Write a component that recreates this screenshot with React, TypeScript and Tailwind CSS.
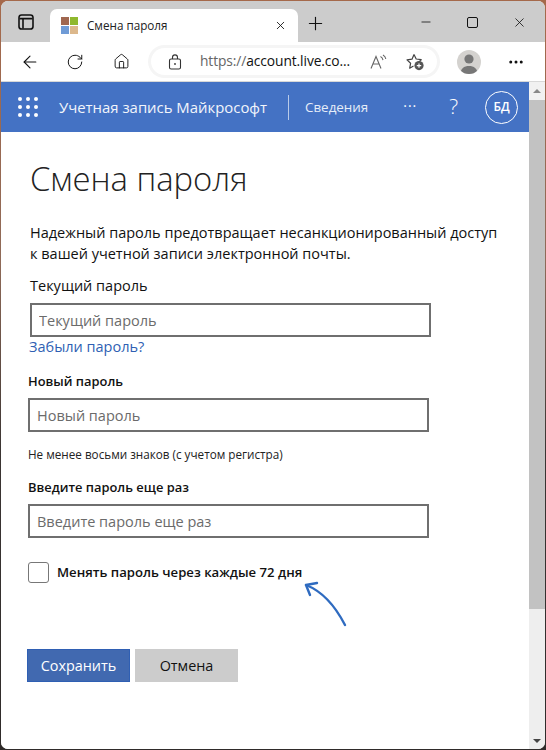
import { ArrowLeft, RotateCw, Home, Plus, X, Minus, MoreHorizontal } from "lucide-react";

const font = "font-['Open_Sans','Noto_Sans',sans-serif]";

function Field({ placeholder, width, className = "" }: { placeholder: string; width: string; className?: string }) {
  return (
    <input
      readOnly
      placeholder={placeholder}
      className={`h-[34px] ${width} border-2 border-[#6f6f6f] bg-white px-[7px] text-[14.5px] text-[#333] outline-none placeholder:text-[#6b6b6b] ${className}`}
    />
  );
}

export default function App() {
  return (
    <div className={`h-[750px] w-[546px] overflow-hidden bg-[linear-gradient(180deg,#a5694b_0%,#8f6a58_35%,#3b3533_60%,#2f2b2a_100%)] pb-px pl-px pr-px pt-px ${font}`}>
      <div className="flex h-[748px] w-[544px] flex-col overflow-hidden rounded-t-[7px] rounded-b-[7px] bg-white">
        {/* tab strip */}
        <div className="flex h-[41px] shrink-0 items-end bg-[#cccccc]">
          <div className="flex h-[33px] w-[49px] items-center justify-center pb-[8px]">
            <svg width="16" height="16" viewBox="0 0 16 16" fill="none" stroke="#111" strokeWidth="1.6">
              <rect x="1" y="1" width="14" height="14" rx="2.6" />
              <path d="M1.5 4.6h13M5 4.6V14.5" />
            </svg>
          </div>
          <div className="flex h-[33px] w-[248px] items-center rounded-t-[7px] bg-white pl-[11px] pr-[11px]">
            <div className="grid h-[17px] w-[17px] shrink-0 grid-cols-2 gap-px">
              <span className="bg-[#a0674f]" />
              <span className="bg-[#8fb82e]" />
              <span className="bg-[#6f9bd6]" />
              <span className="bg-[#dcb88c]" />
            </div>
            <span className="ml-[9px] flex-1 text-[11.7px] text-[#222]">Смена пароля</span>
            <X size={13} strokeWidth={1.6} color="#111" />
          </div>
          <div className="flex h-[33px] w-[35px] items-center justify-center pb-[5px]">
            <Plus size={21} strokeWidth={1.3} color="#111" />
          </div>
          <div className="flex h-[33px] flex-1 items-start justify-end pr-[3px] pt-[3px]">
            <div className="flex h-[20px] w-[46px] items-center justify-center"><Minus size={14} strokeWidth={1.4} color="#111" /></div>
            <div className="flex h-[20px] w-[47px] items-center justify-center"><span className="h-[11px] w-[11px] rounded-[2px] border-[1.5px] border-[#111]" /></div>
            <div className="flex h-[20px] w-[46px] items-center justify-center"><X size={15} strokeWidth={1.3} color="#111" /></div>
          </div>
        </div>
        {/* toolbar */}
        <div className="flex h-[40px] shrink-0 items-center border-b border-[#d8d8d8] bg-white">
          <div className="ml-[19px] flex w-[20px] justify-center"><ArrowLeft size={20} strokeWidth={1.3} color="#111" /></div>
          <div className="ml-[25px] flex w-[20px] justify-center"><RotateCw size={18} strokeWidth={1.3} color="#111" /></div>
          <div className="ml-[26px] flex w-[20px] justify-center"><Home size={17} strokeWidth={1.3} color="#111" /></div>
          <div className="ml-[17px] flex h-[33px] w-[292px] shrink-0 items-center rounded-full bg-[#f5f5f5] p-[3px]">
            <div className="flex h-full w-full items-center rounded-full bg-white pl-[17px]">
              <svg width="14" height="16" viewBox="0 0 14 16" fill="none" stroke="#333" strokeWidth="1.1">
                <rect x="1.5" y="5" width="11" height="10" rx="1.6" />
                <path d="M4.5 5V3.4a2.5 2.5 0 0 1 5 0V5" />
                <circle cx="7" cy="10" r="0.9" fill="#333" stroke="none" />
              </svg>
              <span className="ml-[18px] w-[158px] shrink-0 overflow-hidden whitespace-nowrap text-[13.8px] tracking-[-0.1px] text-[#111]"><span className="text-[#666]">https://</span>account.live.co...</span>
              <svg className="ml-[12px] shrink-0" width="17" height="16" viewBox="0 0 17 16" fill="none" stroke="#666" strokeWidth="1.1">
                <path d="M1 14.5 6 2.5l5 12M3 10h6" />
                <path d="M10.5 2.5c1.5.8 2.3 2 2.5 3.6M13 1c1.6 1 2.6 2.4 2.8 4" />
              </svg>
              <svg className="ml-[19px] shrink-0" width="19" height="18" viewBox="0 0 19 18" fill="none" stroke="#444" strokeWidth="1.2" strokeLinejoin="round">
                <path d="M8 1.5 10.2 6l5 .7-3.5 3.4M7.5 13l-3.8 2.2.9-4.9L1 6.9 6 6.2 8 1.5" />
                <circle cx="13" cy="12.6" r="4.6" fill="#555" stroke="none" />
                <path d="M10.8 12.6h4.4M13 10.4v4.4" stroke="#fff" />
              </svg>
            </div>
          </div>
          <div className="ml-[17px] flex h-[24px] w-[24px] shrink-0 items-end justify-center overflow-hidden rounded-full bg-[#d4d2cf]">
            <svg width="24" height="24" viewBox="0 0 24 24" fill="#777">
              <circle cx="12" cy="9" r="4.6" />
              <path d="M3.5 24c0-5.4 3.6-8 8.5-8s8.5 2.6 8.5 8z" />
            </svg>
          </div>
          <div className="ml-[26px] flex w-[18px] justify-center"><MoreHorizontal size={18} strokeWidth={2} color="#111" /></div>
        </div>
        {/* page + scrollbar */}
        <div className="flex min-h-0 flex-1">
          <div className="flex min-w-0 flex-1 flex-col bg-white">
            <div className="flex h-[50px] shrink-0 items-center bg-[#4472c4] text-white">
              <div className="ml-[17px] grid w-[20px] grid-cols-3 gap-x-[4px] gap-y-[4px]">
                {Array.from({ length: 9 }).map((_, i) => (
                  <span key={i} className="h-[4px] w-[4px] rounded-full bg-white" />
                ))}
              </div>
              <span className="ml-[21px] w-[209px] whitespace-nowrap text-[14.9px] font-medium text-[#f2f5fb]">Учетная запись Майкрософт</span>
              <span className="ml-[20px] h-[25px] w-px bg-[#b9cbe9]" />
              <span className="ml-[16px] text-[13.4px] text-[#e6edf8]">Сведения</span>
              <span className="ml-[35px] mb-[4px] text-[14px] tracking-[1px]">···</span>
              <span className="ml-[32px] text-[21px] font-light">?</span>
              <span className="ml-[27px] flex h-[33px] w-[33px] items-center justify-center rounded-full border-[1.5px] border-white text-[12px] font-semibold">БД</span>
            </div>
            <div className="relative flex-1 pl-[27px]">
              <h1 className="ml-[2px] mt-[24px] text-[32.8px] font-light leading-[46px] text-[#222]">Смена пароля</h1>
              <p className="ml-[2px] mt-[20px] w-[475px] text-[14.5px] leading-[21px] text-[#111]">
                Надежный пароль предотвращает несанкционированный доступ к вашей учетной записи электронной почты.
              </p>
              <div className="ml-[2px] mt-[12px] text-[14.5px] leading-[20px] text-[#111]">Текущий пароль</div>
              <Field placeholder="Текущий пароль" width="w-[401px]" className="ml-[2px] mt-[7px] block" />
              <a className="ml-px block text-[14.5px] leading-[20px] text-[#2f5fb3]">Забыли пароль?</a>
              <div className="mt-[15px] text-[12.9px] font-semibold leading-[18px] text-[#111]">Новый пароль</div>
              <Field placeholder="Новый пароль" width="w-[401px]" className="mt-[8px] block" />
              <div className="mt-[14px] text-[11.7px] leading-[16px] text-[#222]">Не менее восьми знаков (с учетом регистра)</div>
              <div className="mt-[16px] text-[12.9px] font-semibold leading-[18px] text-[#111]">Введите пароль еще раз</div>
              <Field placeholder="Введите пароль еще раз" width="w-[401px]" className="mt-[8px] block" />
              <div className="mt-[24px] flex items-center">
                <span className="h-[21px] w-[21px] rounded-[3px] border border-[#777] bg-white" />
                <span className="ml-[8px] text-[13.15px] font-semibold text-[#111]">Менять пароль через каждые 72 дня</span>
              </div>
              <div className="-ml-px mt-[66px] flex gap-[5px]">
                <button className="h-[33px] w-[103px] border border-[#2f5fb3] bg-[#4169b0] text-[14.4px] text-white">Сохранить</button>
                <button className="h-[33px] w-[103px] bg-[#cccccc] text-[14.4px] text-[#111]">Отмена</button>
              </div>
              <svg className="absolute left-[298px] top-[448px]" width="52" height="50" viewBox="0 0 52 50" fill="none" stroke="#2f6bc0" strokeWidth="2.4" strokeLinecap="round" strokeLinejoin="round">
                <path d="M7 5Q30 14 46 45" />
                <path d="M7 5 18 3M7 5l4 10" />
              </svg>
            </div>
          </div>
          <div className="flex w-[16px] shrink-0 flex-col bg-[#eeeeee]">
            <div className="flex h-[18px] items-center justify-center bg-[#f1f1f1]">
              <span className="h-0 w-0 border-x-[4px] border-b-[4px] border-x-transparent border-b-[#888]" />
            </div>
            <div className="h-[509px] bg-[#c2c2c2]" />
            <div className="flex-1" />
            <div className="flex h-[16px] items-center justify-center">
              <span className="h-0 w-0 border-x-[4px] border-t-[4px] border-x-transparent border-t-[#444]" />
            </div>
          </div>
        </div>
      </div>
    </div>
  );
}
